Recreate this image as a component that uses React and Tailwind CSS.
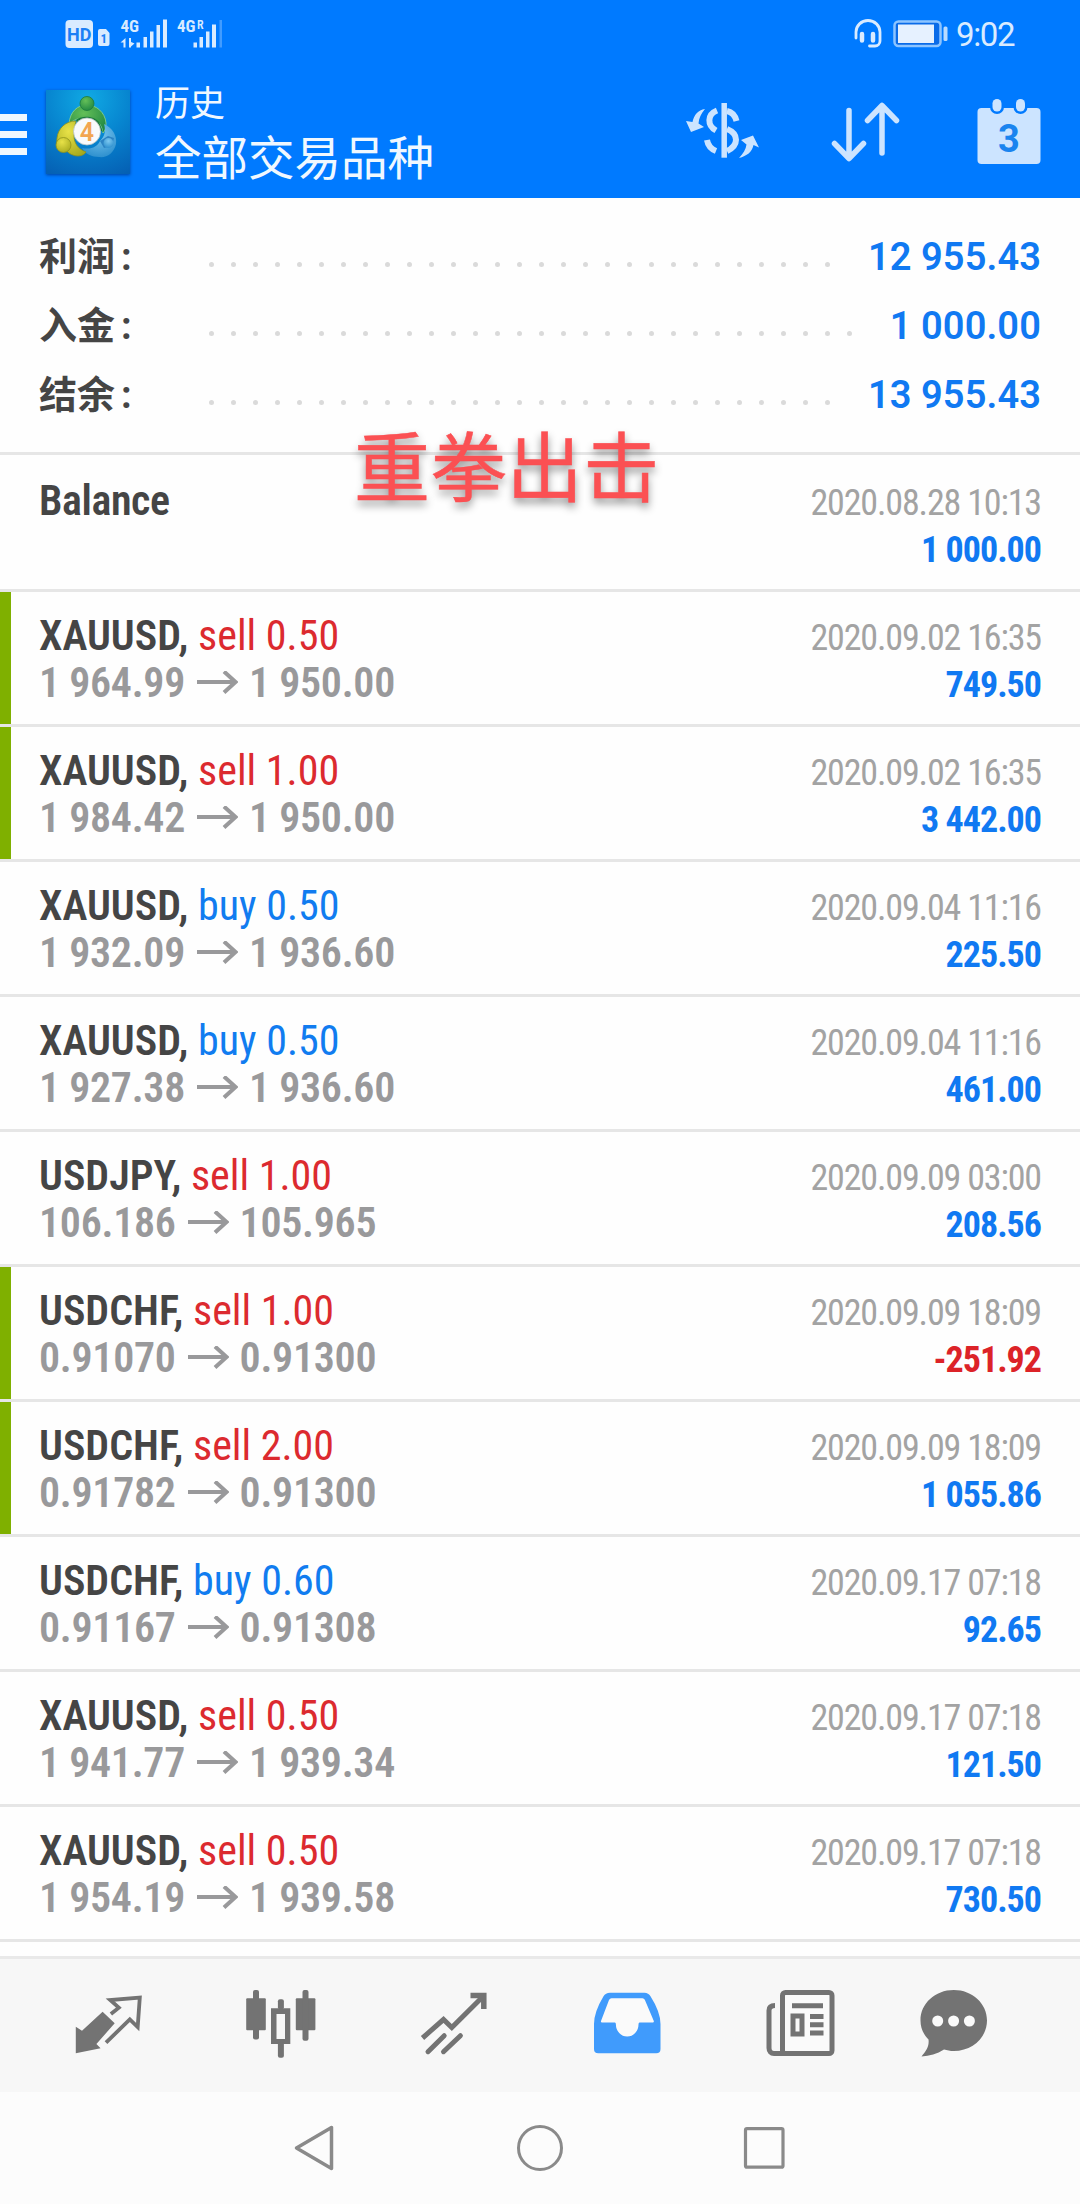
import React from 'react';

const SUMMARY = [
  { label: '利润', value: '12 955.43', dots: 29 },
  { label: '入金', value: '1 000.00', dots: 30 },
  { label: '结余', value: '13 955.43', dots: 29 }
];

const DEALS = [
  { symbol: 'XAUUSD', side: 'sell', volume: '0.50', open: '1 964.99', close: '1 950.00', time: '2020.09.02 16:35', profit: '749.50', marked: true },
  { symbol: 'XAUUSD', side: 'sell', volume: '1.00', open: '1 984.42', close: '1 950.00', time: '2020.09.02 16:35', profit: '3 442.00', marked: true },
  { symbol: 'XAUUSD', side: 'buy', volume: '0.50', open: '1 932.09', close: '1 936.60', time: '2020.09.04 11:16', profit: '225.50' },
  { symbol: 'XAUUSD', side: 'buy', volume: '0.50', open: '1 927.38', close: '1 936.60', time: '2020.09.04 11:16', profit: '461.00' },
  { symbol: 'USDJPY', side: 'sell', volume: '1.00', open: '106.186', close: '105.965', time: '2020.09.09 03:00', profit: '208.56' },
  { symbol: 'USDCHF', side: 'sell', volume: '1.00', open: '0.91070', close: '0.91300', time: '2020.09.09 18:09', profit: '-251.92', marked: true },
  { symbol: 'USDCHF', side: 'sell', volume: '2.00', open: '0.91782', close: '0.91300', time: '2020.09.09 18:09', profit: '1 055.86', marked: true },
  { symbol: 'USDCHF', side: 'buy', volume: '0.60', open: '0.91167', close: '0.91308', time: '2020.09.17 07:18', profit: '92.65' },
  { symbol: 'XAUUSD', side: 'sell', volume: '0.50', open: '1 941.77', close: '1 939.34', time: '2020.09.17 07:18', profit: '121.50' },
  { symbol: 'XAUUSD', side: 'sell', volume: '0.50', open: '1 954.19', close: '1 939.58', time: '2020.09.17 07:18', profit: '730.50' }
];

const StatusBar = () => (
  <div className="h-[68px] flex items-center justify-between pl-[65px] pr-[65px] text-[#d9ebff]">
    <svg width="160" height="48" viewBox="65 10 160 48" fill="currentColor">
      <rect x="65.5" y="20" width="27.5" height="28" rx="4" />
      <text x="79.2" y="40.5" fontSize="18" fontWeight="700" textAnchor="middle" fill="#1b7ff5" fontFamily="Roboto">HD</text>
      <path d="M98 31a2 2 0 0 1 2-2h6l3.5 4v11a2 2 0 0 1-2 2H100a2 2 0 0 1-2-2z" />
      <text x="103.8" y="43" fontSize="13" fontWeight="700" textAnchor="middle" fill="#1b7ff5" fontFamily="Roboto Condensed">1</text>
      <text x="120.5" y="32" fontSize="17" fontWeight="700" fontFamily="Roboto Condensed">4G</text>
      <path d="M125.5 38v9.500h-2v-5h-3zM129 38v9.500h2v-1l3.500-3-3.500-1.500v-4z" />
      <rect x="136.500" y="42.500" width="3.500" height="5" />
      <rect x="143.500" y="37" width="3.500" height="10.500" />
      <rect x="150" y="31.500" width="3.500" height="16" />
      <rect x="156.500" y="25" width="3.500" height="22.500" />
      <rect x="163" y="19.500" width="4" height="28" />
      <text x="177" y="32" fontSize="17" fontWeight="700" fontFamily="Roboto Condensed">4G</text>
      <text x="197" y="29" fontSize="12" fontWeight="600" fontFamily="Roboto Condensed">R</text>
      <rect x="193.500" y="42.500" width="3.500" height="5" />
      <rect x="199.500" y="37" width="3.500" height="10.500" />
      <rect x="206" y="31.500" width="3.500" height="16" />
      <rect x="212" y="24.500" width="4" height="23" />
      <rect x="219.500" y="20" width="2.500" height="27.500" opacity="0.3" />
    </svg>
    <div className="flex items-center">
      <svg width="28" height="32" viewBox="854 18 28 32" fill="none" stroke="currentColor" strokeWidth="2.800">
        <path d="M856 38v-6a12 11.500 0 0 1 24 0v9a5 5 0 0 1-5 5h-5.500" strokeLinecap="round" />
        <path d="M862 34v6.500M873 34v6.500" strokeWidth="4.500" strokeLinecap="round" />
      </svg>
      <svg className="ml-[11px]" width="55" height="32" viewBox="893 18 55 32">
        <rect x="894.500" y="21.500" width="46" height="24.500" rx="4" fill="#0a6be8" stroke="#8cc4ff" strokeWidth="2.500" />
        <rect x="898" y="24.500" width="36" height="18.500" fill="#e6f1ff" />
        <rect x="943.500" y="26.500" width="4" height="14.500" rx="1.500" fill="#b9dbff" />
      </svg>
      <span className="ml-[8px] w-[59px] text-[33px] leading-none tracking-[-1.4px] whitespace-nowrap">9:02</span>
    </div>
  </div>
);

const AppLogo = () => (
  <svg className="shadow-[0_1px_3px_rgba(0,30,90,0.6)]" width="84" height="84" viewBox="0 0 84 84">
    <defs>
      <radialGradient id="tile" cx="0.5" cy="0.1" r="1">
        <stop offset="0" stopColor="#10a9e4" />
        <stop offset="0.5" stopColor="#0784cf" />
        <stop offset="1" stopColor="#0560b4" />
      </radialGradient>
      <radialGradient id="green" cx="0.4" cy="0.3" r="0.8">
        <stop offset="0" stopColor="#64bf58" />
        <stop offset="1" stopColor="#1c8440" />
      </radialGradient>
      <radialGradient id="yellow" cx="0.4" cy="0.3" r="0.8">
        <stop offset="0" stopColor="#e8e248" />
        <stop offset="1" stopColor="#a5a81c" />
      </radialGradient>
      <radialGradient id="sky" cx="0.5" cy="0.3" r="0.8">
        <stop offset="0" stopColor="#7cc8f0" />
        <stop offset="1" stopColor="#2489ca" />
      </radialGradient>
    </defs>
    <rect width="84" height="84" fill="url(#tile)" />
    <path d="M23 34c1-13 9-19 18-19s18 7 19 18c0 5-1 8-3 10-1-9-7-15-15-15-8-1-15 2-19 6z" fill="url(#green)" stroke="#8fd489" strokeWidth="0.800" />
    <path d="M30 30c6-5 18-4 23 2l4 10-10-6H34z" fill="#1d7b3c" />
    <path d="M58 34c9 4 13 12 12 20-2 9-9 14-17 13-7 0-14-3-17-9 9 2 15-1 18-7 5-5 6-10 4-17z" fill="url(#sky)" />
    <path d="M54 51l8-5 6 2-2 8-8 2z" fill="#2c83c4" />
    <path d="M30 31c-10 0-18 7-19 17-1 6 2 10 7 9 2 5 8 9 14 9 4 0 7-2 8-4-8-3-12-9-12-16 0-6 1-11 2-15z" fill="url(#yellow)" stroke="#8f921c" strokeWidth="0.800" />
    <circle cx="41" cy="13.500" r="7" fill="url(#green)" stroke="#1d7b3c" strokeWidth="0.800" />
    <circle cx="17.500" cy="55" r="7.500" fill="url(#yellow)" stroke="#8f921c" strokeWidth="0.800" />
    <circle cx="62.500" cy="53" r="5" fill="url(#sky)" />
    <circle cx="41" cy="41.500" r="13.500" fill="#f8fafb" stroke="#b9c4c4" strokeWidth="0.800" />
    <text x="41" y="50.500" fontSize="25" fontWeight="600" textAnchor="middle" fill="#f2a650" fontFamily="Roboto">4</text>
  </svg>
);

const AppBar = () => (
  <div className="h-[130px] flex pt-[22px]">
    <div className="w-[27px] pt-[24px] flex flex-col gap-[10px]">
      <span className="h-[7px] bg-[#eef7ff]" />
      <span className="h-[7px] bg-[#eef7ff]" />
      <span className="h-[7px] bg-[#eef7ff]" />
    </div>
    <div className="ml-[19px]">
      <AppLogo />
    </div>
    <div className="ml-[25px] flex flex-col text-[#f0f8ff]">
      <span className="mt-[-5px] text-[35px] leading-[40px]">历史</span>
      <span className="mt-[6px] text-[46.5px] leading-[56px]">全部交易品种</span>
    </div>
    <div className="ml-auto flex text-[#cce4ff]">
      <svg width="78" height="80" viewBox="0 -8 78 80" fill="none" stroke="currentColor" strokeWidth="6">
        <path d="M40.200 5v54.700" strokeWidth="5.500" />
        <path d="M33 12.500c-10 4-10 15-1 20M23 42c1 6 4 9 9 11" />
        <path d="M43 13c5 1 8 4 9.500 10M43 31c12 5 12 16 0 22" />
        <path d="M21 11c-7 1-11 6-12.500 13L2 23l5 11 13-5-5.500-3.500C15 20 17 16 21 11zM55 60c8-2 13-6 14.500-13l5.500 2.500L69 37.500 57 42l5.500 4.500C62 51 59 56 55 60z" fill="currentColor" stroke="none" />
      </svg>
      <svg className="ml-[68px]" width="70" height="80" viewBox="830 90 70 80" fill="none" stroke="currentColor" strokeWidth="5.500" strokeLinecap="round" strokeLinejoin="round">
        <path d="M849 110.500V158M834.500 143.500L849 158.500L863.500 143.500" />
        <path d="M882 153V106M867.500 120.500L882 105.500L896.500 120.500" />
      </svg>
      <svg className="ml-[76px] mr-[38px]" width="66" height="80" viewBox="976 90 66 80">
        <rect x="977.500" y="108" width="63" height="56" rx="4" fill="currentColor" />
        <rect x="990" y="96" width="14" height="18" rx="7" fill="#007aff" />
        <rect x="1013.500" y="96" width="14" height="18" rx="7" fill="#007aff" />
        <rect x="992.500" y="99" width="9" height="12.500" rx="4.500" fill="currentColor" />
        <rect x="1016" y="99" width="9" height="12.500" rx="4.500" fill="currentColor" />
        <text x="1009" y="151.500" fontSize="38" fontWeight="700" textAnchor="middle" fill="#1a84ef" fontFamily="Roboto">3</text>
      </svg>
    </div>
  </div>
);

const SummaryRow = ({ label, value, dots }) => (
  <div className="h-[69px] pl-[39px] pr-[39px] flex items-center">
    <span className="w-[170px] text-[38px] font-bold text-[#454545]">
      {label}<span className="ml-[6px]">:</span>
    </span>
    <span className="mt-[13px] flex gap-[17px]">
      {Array.from({ length: dots }, (_, i) => (
        <span key={i} className="size-[5px] rounded-full bg-[#dadada]" />
      ))}
    </span>
    <span className="ml-auto text-[38px] font-semibold text-[#1079f2] tracking-[0.1px] whitespace-nowrap">{value}</span>
  </div>
);

const Arrow = () => (
  <svg className="inline-block ml-[12px] mr-[11px] align-baseline" width="41" height="26" viewBox="0 0 41 26" fill="none" stroke="currentColor" strokeWidth="4">
    <path d="M0 11h38.500M27 0.500L38.500 11L27 21.500" />
  </svg>
);

const DealRow = ({ deal }) => (
  <div className="h-[135px] flex border-b-[3px] border-[#e6e6e6] [font-family:'Roboto_Condensed']">
    <span className={deal.marked ? 'w-[11px] bg-[#7fb000]' : 'w-[11px]'} />
    <div className="ml-[28px] pt-[20px] text-[42px] leading-[47px] whitespace-nowrap">
      <div className="font-semibold text-[#454545]">
        {deal.symbol},{' '}
        <span className={deal.side === 'sell' ? 'font-normal text-[#dc2a2f]' : 'font-normal text-[#117cf0]'}>
          {deal.side} {deal.volume}
        </span>
      </div>
      <div className="font-semibold text-[#99999b] tracking-[-0.3px]">
        {deal.open}<Arrow />{deal.close}
      </div>
    </div>
    <div className="ml-auto mr-[39px] pt-[23px] text-right text-[36px] leading-[47px]">
      <div className="text-[#a3a3a3] tracking-[-1.15px]">{deal.time}</div>
      <div className={deal.profit.startsWith('-') ? 'font-bold text-[#dc2328] tracking-[-1px]' : 'font-bold text-[#1079f2] tracking-[-1px]'}>{deal.profit}</div>
    </div>
  </div>
);

const TabBar = () => (
  <div className="h-[136px] pl-[21px] pb-[4px] flex items-center bg-[#f7f7f7] border-t-[3px] border-[#e9e9e9] text-[#737373]">
    <div className="w-[173px] flex justify-center">
      <svg width="72" height="72" viewBox="0 0 72 72">
        <path d="M3.800 38.700V65.300L28.600 60.300L24.400 56L42.700 35.300L30.600 23.700L10 42.700z" fill="currentColor" />
        <path d="M38.900 26L46.800 19.700L38.200 12L67.800 9.500L65.700 39L57.800 31.300L34 54.700" fill="none" stroke="currentColor" strokeWidth="3.800" />
      </svg>
    </div>
    <div className="w-[173px] flex justify-center">
      <svg width="72" height="72" viewBox="0 0 72 72" fill="currentColor">
        <rect x="1.200" y="10.300" width="19.600" height="32" rx="1" />
        <rect x="8" y="2" width="6" height="49.500" rx="2" />
        <path d="M26 20.300h19.300V56H26zM31.500 26v25H40V26z" fillRule="evenodd" />
        <rect x="32.900" y="11.300" width="6" height="10" rx="2" />
        <rect x="32.900" y="54" width="6" height="15.700" rx="2" />
        <rect x="50.800" y="10.300" width="19.600" height="32" rx="1" />
        <rect x="57.500" y="2" width="6" height="50.700" rx="2" />
      </svg>
    </div>
    <div className="w-[173px] flex justify-center">
      <svg width="72" height="72" viewBox="0 0 72 72" fill="none" stroke="currentColor" strokeWidth="5">
        <path d="M4.500 50L25.500 31.500L33.800 39.500L65.500 8" />
        <path d="M52.500 7.500H65.800V21" strokeWidth="5.500" />
        <path d="M10 63.700L26.200 47.700M25.500 63.700L42.400 47.700" strokeLinecap="round" />
      </svg>
    </div>
    <div className="w-[173px] flex justify-center">
      <svg width="72" height="72" viewBox="0 0 72 72" fill="#409bfc">
        <path d="M19 4.700h34.500q4 0 6 3.500Q69.500 24 69.500 36v25q0 4.300-4.300 4.300H7.300Q3 65.300 3 61V36Q3 24 12.500 8.200q2-3.500 6.500-3.500z" />
        <path d="M20.500 10.300h31q1.500 0 2.300 1.500L62.800 33q.3 1.500-1 1.500H48.500q-1 0-1 2a11.300 12 0 0 1-22.600 0q0-2-1-2H11q-1.400 0-1-1.500L18 12q.8-1.700 2.500-1.700z" fill="#fafafa" />
      </svg>
    </div>
    <div className="w-[174px] flex justify-center">
      <svg width="72" height="72" viewBox="0 0 72 72" fill="none" stroke="currentColor" strokeWidth="5">
        <rect x="18.500" y="4.500" width="49.500" height="61" rx="3" fill="#fafafa" />
        <path d="M11 17.500c-4 0-6 2-6 5V60c0 3.500 2 5.500 5 5.500h11" />
        <path d="M28 17.700h31M46 28.500h13.500M46 36.700h13.500M46 45h13.500" />
        <rect x="29" y="28" width="9" height="18" />
      </svg>
    </div>
    <div className="w-[132px] flex justify-center">
      <svg width="72" height="72" viewBox="0 0 72 72" fill="currentColor">
        <path d="M36.800 2C55.500 2 70 15.500 70 32.500S55.500 63 36.800 63c-3.500 0-6.800-.6-9.800-1.500-7 4.500-14.500 6.500-22.500 7 4-5 8-9.500 7-17C6.500 46.500 3.500 40 3.500 32.500 3.500 15.500 18 2 36.800 2z" />
        <circle cx="20.700" cy="33" r="5.500" fill="#fafafa" />
        <circle cx="36.600" cy="33" r="5.500" fill="#fafafa" />
        <circle cx="52.400" cy="33" r="5.500" fill="#fafafa" />
      </svg>
    </div>
  </div>
);

const SystemNav = () => (
  <div className="h-[112px] pl-[290px] flex items-center bg-[#fcfcfc]">
    <svg width="48" height="48" viewBox="0 0 48 48" fill="none" stroke="#8a8a8a" strokeWidth="3.500" strokeLinejoin="round">
      <path d="M41.500 3.500V44.500L6.500 24z" />
    </svg>
    <svg className="ml-[178px]" width="48" height="48" viewBox="0 0 48 48" fill="none" stroke="#8a8a8a" strokeWidth="3">
      <circle cx="24" cy="24" r="21.500" />
    </svg>
    <svg className="ml-[176px]" width="48" height="48" viewBox="0 0 48 48" fill="none" stroke="#8a8a8a" strokeWidth="3.200">
      <rect x="5.500" y="4.700" width="37.500" height="38.500" rx="1.500" />
    </svg>
  </div>
);

export default function App() {
  return (
    <div className="relative w-[1080px] h-[2204px] flex flex-col overflow-hidden bg-[#fefefe] [font-family:Roboto,'Noto_Sans_CJK_SC',sans-serif]">
      <header className="bg-[#007aff]">
        <StatusBar />
        <AppBar />
      </header>

      <section className="h-[257px] pt-[25px] border-b-[3px] border-[#e6e6e6]">
        {SUMMARY.map((row) => (
          <SummaryRow key={row.label} {...row} />
        ))}
      </section>

      <div className="h-[137px] pl-[39px] pr-[39px] flex justify-between border-b-[3px] border-[#e6e6e6] leading-[47px] [font-family:'Roboto_Condensed']">
        <span className="pt-[22px] text-[42px] font-semibold text-[#454545] tracking-[-0.4px]">Balance</span>
        <div className="pt-[25px] text-right text-[36px]">
          <div className="text-[#a3a3a3] tracking-[-1.15px]">2020.08.28 10:13</div>
          <div className="font-bold text-[#1079f2] tracking-[-1px]">1 000.00</div>
        </div>
      </div>

      {DEALS.map((deal, i) => (
        <DealRow key={i} deal={deal} />
      ))}

      <div className="mt-auto">
        <TabBar />
        <SystemNav />
      </div>

      {/* caption stamped over the list */}
      <div className="absolute left-[354px] top-[425px] text-[76px] leading-[90px] tracking-[0.4px] text-[#fb5053] [text-shadow:0_5px_8px_rgba(0,0,0,0.45)] [-webkit-text-stroke:0.5px_#fb5053] whitespace-nowrap">
        重拳出击
      </div>
    </div>
  );
}
